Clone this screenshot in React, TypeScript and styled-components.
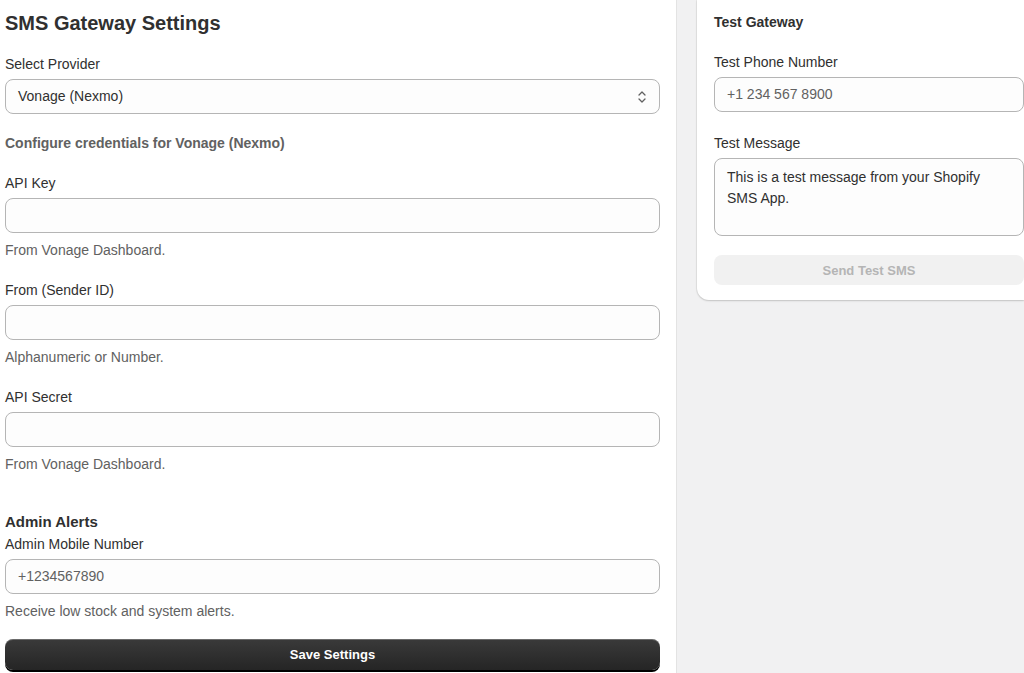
import React from 'react'
import styled, { createGlobalStyle } from 'styled-components'

const Global = createGlobalStyle`
  body {
    margin: 0;
    font-family: 'Liberation Sans', Arial, sans-serif;
    background: #f1f1f2;
    color: #303030;
  }
`

const Page = styled.div`
  display: grid;
  grid-template-columns: 677px 1fr;
  height: 673px;
  overflow: hidden;
`

const Main = styled.div`
  background: #fff;
  border-right: 1px solid #e3e3e3;
  padding: 12px 16px 0 5px;
`

const Side = styled.div`
  padding-left: 20px;
`

const Card = styled.div`
  background: #fff;
  border-radius: 0 0 0 12px;
  box-shadow: 0 1px 2px rgba(0, 0, 0, 0.15), 0 0 0 1px #e6e6e6;
  padding: 14px 0 16px 17px;
  height: 300px;
  box-sizing: border-box;
`

const Title = styled.h1`
  font-size: 20px;
  font-weight: 700;
  margin: 0 0 21px;
  color: #303030;
`

const CardTitle = styled.h2`
  font-size: 14px;
  font-weight: 700;
  margin: 0 0 24px;
`

const Label = styled.div<{ mt?: number }>`
  font-size: 14px;
  margin-top: ${(p) => p.mt ?? 0}px;
  margin-bottom: 7px;
`

const SubHead = styled.div<{ mt?: number; size?: number }>`
  font-size: ${(p) => p.size ?? 14}px;
  font-weight: 700;
  color: ${(p) => (p.size ? '#303030' : '#616161')};
  margin-top: ${(p) => p.mt ?? 0}px;
`

const Field = styled.div<{ h?: number }>`
  height: ${(p) => p.h ?? 35}px;
  box-sizing: border-box;
  border: 1px solid #b5b5b5;
  border-radius: 8px;
  background: #fdfdfd;
  padding: 0 12px;
  display: flex;
  align-items: ${(p) => (p.h ? 'flex-start' : 'center')};
  justify-content: space-between;
  font-size: 14px;
  color: #303030;
  line-height: 21px;
`

const Placeholder = styled.span`
  color: #616161;
`

const Help = styled.div`
  font-size: 14px;
  color: #616161;
  margin-top: 9px;
`

const PrimaryButton = styled.button`
  width: 100%;
  height: 31px;
  margin-top: 20px;
  border: none;
  border-radius: 8px;
  background: linear-gradient(#3a3a3a, #252525);
  box-shadow: inset 0 1px 0 rgba(255, 255, 255, 0.25), 0 2px 0 #000;
  color: #fff;
  font: 700 13px 'Liberation Sans', Arial, sans-serif;
`

const GhostButton = styled.button`
  width: 100%;
  height: 30px;
  margin-top: 19px;
  border: none;
  border-radius: 8px;
  background: #f1f1f1;
  color: #b5b5b5;
  font: 700 13px 'Liberation Sans', Arial, sans-serif;
`

const Chevron = () => (
  <svg width="10" height="14" viewBox="0 0 10 14" fill="none" stroke="#616161" strokeWidth="1.3" strokeLinecap="round" strokeLinejoin="round">
    <path d="M2 5l3-3 3 3M2 9l3 3 3-3" />
  </svg>
)

export default function App() {
  return (
    <Page>
      <Global />
      <Main>
        <Title>SMS Gateway Settings</Title>
        <Label>Select Provider</Label>
        <Field>
          <span>Vonage (Nexmo)</span>
          <Chevron />
        </Field>
        <SubHead mt={21}>Configure credentials for Vonage (Nexmo)</SubHead>
        <Label mt={24}>API Key</Label>
        <Field />
        <Help>From Vonage Dashboard.</Help>
        <Label mt={24}>From (Sender ID)</Label>
        <Field />
        <Help>Alphanumeric or Number.</Help>
        <Label mt={24}>API Secret</Label>
        <Field />
        <Help>From Vonage Dashboard.</Help>
        <SubHead mt={41} size={15}>Admin Alerts</SubHead>
        <Label mt={6}>Admin Mobile Number</Label>
        <Field>
          <Placeholder>+1234567890</Placeholder>
        </Field>
        <Help>Receive low stock and system alerts.</Help>
        <PrimaryButton>Save Settings</PrimaryButton>
      </Main>
      <Side>
        <Card>
          <CardTitle>Test Gateway</CardTitle>
          <Label>Test Phone Number</Label>
          <Field>
            <Placeholder>+1 234 567 8900</Placeholder>
          </Field>
          <Label mt={23}>Test Message</Label>
          <Field h={78} style={{ paddingTop: 8 }}>
            <span>This is a test message from your Shopify SMS App.</span>
          </Field>
          <GhostButton>Send Test SMS</GhostButton>
        </Card>
      </Side>
    </Page>
  )
}
